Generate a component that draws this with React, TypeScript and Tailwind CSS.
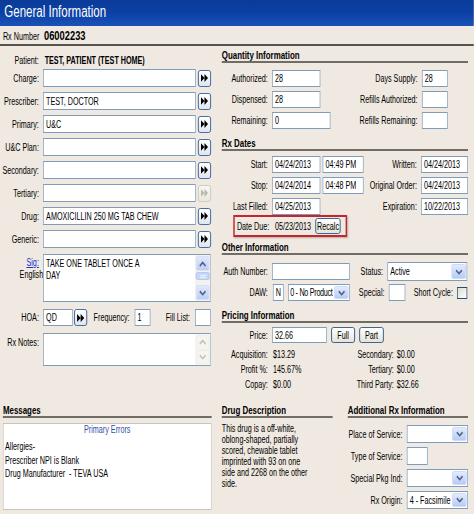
import React from "react";

// The reference is a horizontally squeezed capture (~0.72), so the form is laid out
// at its natural width and squeezed once at the root.

const Chevron = ({ up = false, color = "#4d6185" }: { up?: boolean; color?: string }) => (
  <svg width="11" height="6" viewBox="0 0 11 6">
    <path d={up ? "M1.5 5 L5.5 1.5 L9.5 5" : "M1.5 1.2 L5.5 4.6 L9.5 1.2"} stroke={color} strokeWidth="1.9" fill="none" />
  </svg>
);

const ArrowBtn = ({ disabled = false }: { disabled?: boolean }) => (
  <div
    className={`w-[18px] h-[17px] shrink-0 rounded-[3px] border flex items-center justify-center bg-gradient-to-b ${
      disabled ? "border-[#c9c7ba] from-[#f7f7f3] to-[#e9e7de]" : "border-[#2b5a9a] from-white to-[#dfe5ee]"
    }`}
  >
    <svg width="10" height="8" viewBox="0 0 10 8">
      <path d="M0 0 L5 4 L0 8 Z M5 0 L10 4 L5 8 Z" fill={disabled ? "#b9b7aa" : "#000"} />
    </svg>
  </div>
);

const Input = ({ value = "", className = "" }: { value?: string; className?: string }) => (
  <div className={`bg-white border border-[#7f9db9] px-[3px] flex items-center whitespace-nowrap overflow-hidden shrink-0 ${className}`}>
    {value}
  </div>
);

const Select = ({ value = "", className = "", textClass = "px-[3px]" }: { value?: string; className?: string; textClass?: string }) => (
  <div className={`bg-white border border-[#7f9db9] flex items-stretch shrink-0 ${className}`}>
    <div className={`flex-1 flex items-center whitespace-nowrap overflow-hidden ${textClass}`}>{value}</div>
    <div className="w-[20px] m-[1px] rounded-[2px] bg-gradient-to-b from-[#e3ebfd] to-[#b7cbf5] border border-[#c7d6f6] flex items-center justify-center shrink-0">
      <Chevron />
    </div>
  </div>
);

const Btn = ({ label, className = "" }: { label: string; className?: string }) => (
  <div className={`rounded-[3px] border border-[#1f4f86] bg-gradient-to-b from-white to-[#e6e3d8] flex items-center justify-center shrink-0 ${className}`}>
    {label}
  </div>
);

const ScrollBar = ({ disabled = false }: { disabled?: boolean }) => (
  <div className={`w-[21px] shrink-0 flex flex-col ${disabled ? "bg-[#f7f7f4]" : "bg-[#f3f2ec]"}`}>
    <div
      className={`h-[15px] m-[1px] mb-0 rounded-[2px] flex items-center justify-center border ${
        disabled ? "border-[#eeede8] bg-[#f5f4ef]" : "border-[#d4def7] bg-gradient-to-b from-[#e0e8fc] to-[#bccdf5]"
      }`}
    >
      <Chevron up color={disabled ? "#c4c3bb" : "#4d6185"} />
    </div>
    {!disabled && (
      <div className="h-[8px] mx-[1px] mt-[1px] rounded-[2px] border border-[#b2c4ef] bg-[#c8d6f8] flex flex-col justify-center items-center gap-[1px]">
        <div className="w-[8px] h-px bg-[#eef3fe]" />
        <div className="w-[8px] h-px bg-[#eef3fe]" />
      </div>
    )}
    <div className="flex-1" />
    <div
      className={`h-[15px] m-[1px] mt-0 rounded-[2px] flex items-center justify-center border ${
        disabled ? "border-[#eeede8] bg-[#f5f4ef]" : "border-[#d4def7] bg-gradient-to-b from-[#e0e8fc] to-[#bccdf5]"
      }`}
    >
      <Chevron color={disabled ? "#c4c3bb" : "#4d6185"} />
    </div>
  </div>
);

const Label = ({ text, className = "" }: { text: string; className?: string }) => (
  <div className={`flex justify-end whitespace-nowrap shrink-0 ${className}`}>
    <span>{text}</span>
  </div>
);

const SectionHead = ({ title, className = "" }: { title: string; className?: string }) => (
  <div className={`h-[14px] border-b-2 border-[#6f6d66] font-bold text-[11px] leading-[12px] whitespace-nowrap ${className}`}>
    {title}
  </div>
);

const leftRows: { label: string; value: string; disabled?: boolean }[] = [
  { label: "Charge:", value: "" },
  { label: "Prescriber:", value: "TEST, DOCTOR" },
  { label: "Primary:", value: "U&C" },
  { label: "U&C Plan:", value: "" },
  { label: "Secondary:", value: "" },
  { label: "Tertiary:", value: "", disabled: true },
  { label: "Drug:", value: "AMOXICILLIN 250 MG TAB CHEW" },
  { label: "Generic:", value: "" },
];

const quantityRows = [
  { l: "Authorized:", v: "28", w: "w-[67px]", r: "Days Supply:", rv: "28" },
  { l: "Dispensed:", v: "28", w: "w-[67px]", r: "Refills Authorized:", rv: "" },
  { l: "Remaining:", v: "0", w: "w-[81px]", r: "Refills Remaining:", rv: "" },
];

const dateRows = [
  { l: "Start:", v: "04/24/2013", t: "04:49 PM", r: "Written:", rv: "04/24/2013" },
  { l: "Stop:", v: "04/24/2014", t: "04:48 PM", r: "Original Order:", rv: "04/24/2013" },
  { l: "Last Filled:", v: "04/25/2013", t: "", r: "Expiration:", rv: "10/22/2013" },
];

const pricingRows = [
  { l: "Acquisition:", v: "$13.29", r: "Secondary:", rv: "$0.00" },
  { l: "Profit %:", v: "145.67%", r: "Tertiary:", rv: "$0.00" },
  { l: "Copay:", v: "$0.00", r: "Third Party:", rv: "$32.66" },
];

const description = [
  "This drug is a off-white,",
  "oblong-shaped, partially",
  "scored, chewable tablet",
  "imprinted with 93 on one",
  "side and 2268 on the other",
  "side.",
];

export default function App() {
  return (
    <div className="w-[474px] h-[514px] overflow-hidden bg-[#efe9e1]">
      <div className="w-[658px] h-[514px] origin-top-left scale-x-[0.72] text-[10px] text-black font-['Liberation_Sans',Arial,sans-serif]">
        {/* Title bar */}
        <div className="h-[26px] bg-gradient-to-b from-[#0a3b99] via-[#0c40a4] to-[#1a52b8] text-white text-[16px] leading-[24px] pl-[6px]">
          General Information
        </div>

        {/* Rx Number */}
        <div className="h-[20px] pt-[2px] border-b-2 border-[#55544f] flex items-center pl-[4px]">
          <span className="w-[57px]">Rx Number</span>
          <span className="font-bold text-[13px]">06002233</span>
        </div>

        <div className="flex">
          {/* Left column */}
          <div className="w-[293px] flex flex-col">
            <div className="mt-[6px] h-[16px] flex items-center">
              <Label text="Patient:" className="w-[54px]" />
              <span className="ml-[8px] font-bold whitespace-nowrap">TEST, PATIENT (TEST HOME)</span>
            </div>
            <div className="mt-[1px] flex flex-col gap-[5px]">
              {leftRows.map((r) => (
                <div key={r.label} className="h-[18px] flex items-center">
                  <Label text={r.label} className="w-[54px]" />
                  <Input value={r.value} className="ml-[6px] w-[212px] h-[18px]" />
                  <div className="ml-[3px]">
                    <ArrowBtn disabled={r.disabled} />
                  </div>
                </div>
              ))}
            </div>
            <div className="mt-[6px] h-[48px] flex">
              <div className="w-[54px] shrink-0 flex flex-col items-end pt-[3px] leading-[12px]">
                <span className="text-[#1a2fd0] underline">Sig:</span>
                <span className="mr-[-6px]">English</span>
              </div>
              <div className="ml-[6px] flex-1 flex border border-[#7f9db9] bg-white">
                <div className="flex-1 px-[3px] pt-[3px] leading-[12px]">
                  TAKE ONE TABLET ONCE A
                  <br />
                  DAY
                </div>
                <ScrollBar />
              </div>
            </div>
            <div className="mt-[7px] h-[17px] flex items-center">
              <Label text="HOA:" className="w-[54px]" />
              <Input value="QD" className="ml-[6px] w-[41px] h-[17px]" />
              <div className="ml-[2px]">
                <ArrowBtn />
              </div>
              <span className="ml-[9px]">Frequency:</span>
              <Input value="1" className="ml-[7px] w-[22px] h-[17px]" />
              <div className="flex-1 flex justify-end">Fill List:</div>
              <Input className="ml-[7px] w-[22px] h-[17px]" />
            </div>
            <div className="mt-[7px] h-[33px] flex">
              <div className="w-[54px] shrink-0 flex justify-end pt-[4px] leading-[12px] whitespace-nowrap">Rx Notes:</div>
              <div className="ml-[6px] flex-1 flex border border-[#7f9db9] bg-white">
                <div className="flex-1" />
                <ScrollBar disabled />
              </div>
            </div>
          </div>

          {/* Right column */}
          <div className="ml-[15px] w-[342px] flex flex-col">
            <SectionHead title="Quantity Information" className="mt-[3px]" />
            <div className="mt-[7px] flex flex-col gap-[4px]">
              {quantityRows.map((r) => (
                <div key={r.l} className="h-[17px] flex items-center">
                  <Label text={r.l} className="w-[64px]" />
                  <Input value={r.v} className={`ml-[6px] h-[17px] ${r.w}`} />
                  <div className="flex-1 flex justify-end whitespace-nowrap">{r.r}</div>
                  <Input value={r.rv} className="ml-[6px] w-[36px] h-[17px]" />
                  <div className="w-[28px] shrink-0" />
                </div>
              ))}
            </div>

            <SectionHead title="Rx Dates" className="mt-[8px]" />
            <div className="mt-[5px] flex flex-col gap-[4px]">
              {dateRows.map((r) => (
                <div key={r.l} className="h-[17px] flex items-center">
                  <Label text={r.l} className="w-[64px]" />
                  <Input value={r.v} className="ml-[6px] w-[67px] h-[17px]" />
                  {r.t ? (
                    <Input value={r.t} className="ml-[3px] w-[57px] h-[17px]" />
                  ) : (
                    <div className="ml-[3px] w-[57px] shrink-0" />
                  )}
                  <div className="flex-1 flex justify-end whitespace-nowrap">{r.r}</div>
                  <Input value={r.rv} className="ml-[6px] w-[65px] h-[17px]" />
                </div>
              ))}
            </div>
            <div className="ml-[16px] w-[158px] h-[22px] border-2 border-[#c4262e] shadow-[1px_1px_2px_rgba(0,0,0,0.25)] flex items-center pl-[3px]">
              <span>Date Due:</span>
              <span className="ml-[8px]">05/23/2013</span>
              <Btn label="Recalc" className="ml-[6px] w-[35px] h-[16px]" />
            </div>

            <SectionHead title="Other Information" className="mt-[4px]" />
            <div className="mt-[7px] h-[19px] flex items-center">
              <Label text="Auth Number:" className="w-[64px]" />
              <Input className="ml-[6px] w-[108px] h-[17px]" />
              <div className="flex-1 flex justify-end">Status:</div>
              <Select value="Active" className="ml-[6px] w-[111px] h-[19px]" />
              <div className="w-[1px] shrink-0" />
            </div>
            <div className="mt-[3px] h-[17px] flex items-center">
              <Label text="DAW:" className="w-[64px]" />
              <Input value="N" className="ml-[7px] w-[15px] h-[17px] justify-center px-0" />
              <Select
                value="0 - No Product"
                className="ml-[6px] w-[86px] h-[17px]"
                textClass="pl-[2px] tracking-[-0.4px]"
              />
              <div className="flex-1 flex justify-end">Special:</div>
              <Input className="ml-[6px] w-[23px] h-[17px]" />
              <div className="ml-[6px] w-[60px] flex justify-end whitespace-nowrap">Short Cycle:</div>
              <div className="ml-[6px] w-[14px] h-[12px] border border-[#1c5180] bg-gradient-to-br from-[#dcdbd3] to-white shrink-0" />
              <div className="w-[1px] shrink-0" />
            </div>

            <SectionHead title="Pricing Information" className="mt-[8px]" />
            <div className="mt-[4px] h-[16px] flex items-center">
              <Label text="Price:" className="w-[64px]" />
              <Input value="32.66" className="ml-[6px] w-[76px] h-[16px]" />
              <Btn label="Full" className="ml-[6px] w-[33px] h-[16px]" />
              <Btn label="Part" className="ml-[6px] w-[34px] h-[16px]" />
            </div>
            <div className="mt-[4px] flex flex-col">
              {pricingRows.map((r) => (
                <div key={r.l} className="h-[15px] flex items-center">
                  <div className="w-[186px] flex shrink-0">
                    <Label text={r.l} className="w-[64px]" />
                    <span className="ml-[7px]">{r.v}</span>
                  </div>
                  <Label text={r.r} className="w-[53px]" />
                  <span className="ml-[4px]">{r.rv}</span>
                </div>
              ))}
            </div>
          </div>
        </div>

        {/* Bottom sections */}
        <div className="mt-[10px] flex">
          <div className="ml-[4px] w-[290px] flex flex-col">
            <div className="h-[16px] border-b-2 border-[#6f6d66] font-bold text-[11px] leading-[14px] pt-[1px]">Messages</div>
            <div className="mt-[5px] h-[87px] border border-[#c8c5bb] bg-white px-[2px]">
              <div className="text-center text-[#3151a6] leading-[12px]">Primary Errors</div>
              <div className="mt-[4px] leading-[13.5px]">
                <div>Allergies-</div>
                <div>Prescriber NPI is Blank</div>
                <div>Drug Manufacturer&nbsp; - TEVA USA</div>
              </div>
            </div>
          </div>
          <div className="ml-[14px] w-[154px] flex flex-col">
            <div className="h-[16px] border-b-2 border-[#6f6d66] font-bold text-[11px] leading-[14px] pt-[1px] whitespace-nowrap">
              Drug Description
            </div>
            <div className="mt-[5px] leading-[11px] whitespace-nowrap">
              {description.map((line) => (
                <div key={line}>{line}</div>
              ))}
            </div>
          </div>
          <div className="ml-[21px] w-[167px] flex flex-col">
            <div className="h-[16px] border-b-2 border-[#6f6d66] font-bold text-[11px] leading-[14px] pt-[1px] whitespace-nowrap">
              Additional Rx Information
            </div>
            <div className="mt-[7px] flex flex-col gap-[4px]">
              <div className="h-[18px] flex items-center">
                <Label text="Place of Service:" className="w-[76px]" />
                <Select className="ml-[6px] w-[85px] h-[18px]" />
              </div>
              <div className="h-[18px] flex items-center">
                <Label text="Type of Service:" className="w-[76px]" />
                <Input className="ml-[6px] w-[29px] h-[18px]" />
              </div>
              <div className="h-[18px] flex items-center">
                <Label text="Special Pkg Ind:" className="w-[76px]" />
                <Select className="ml-[6px] w-[85px] h-[18px]" />
              </div>
              <div className="h-[18px] flex items-center">
                <Label text="Rx Origin:" className="w-[76px]" />
                <Select value="4 - Facsimile" className="ml-[6px] w-[85px] h-[18px]" />
              </div>
            </div>
          </div>
        </div>
      </div>
    </div>
  );
}
